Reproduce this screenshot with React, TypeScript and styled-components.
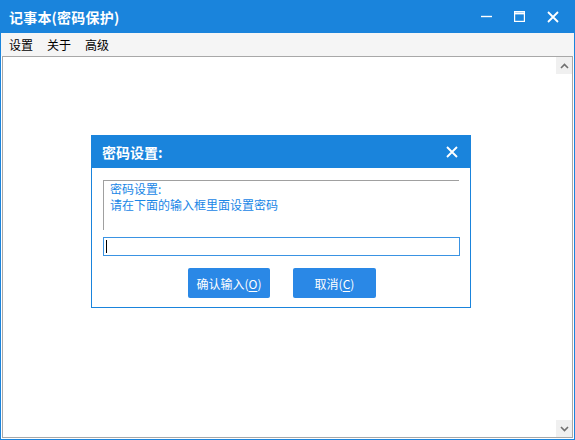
import React from "react";
import styled, { createGlobalStyle } from "styled-components";

const BLUE = "#1a84dc";
const FONT = `"Noto Sans CJK SC", "Noto Sans", sans-serif`;

const GlobalStyle = createGlobalStyle`
  html, body {
    margin: 0;
    padding: 0;
    background: #ffffff;
  }
  body {
    font-family: ${FONT};
  }
`;

const Window = styled.div`
  position: relative;
  width: 575px;
  height: 440px;
  box-sizing: border-box;
  display: flex;
  flex-direction: column;
  border: 1px solid ${BLUE};
  border-top: none;
  background: #ffffff;
  overflow: hidden;
`;

const TitleBar = styled.div`
  height: 33px;
  flex: none;
  display: flex;
  align-items: center;
  background: ${BLUE};
  color: #ffffff;
  padding-left: 8px;
`;

const Title = styled.div`
  flex: 1;
  font-size: 14px;
  font-weight: 700;
  letter-spacing: 0.2px;
`;

const CaptionButton = styled.div`
  width: 33px;
  height: 33px;
  display: flex;
  align-items: center;
  justify-content: center;
`;

const MenuBar = styled.div`
  height: 23px;
  flex: none;
  display: flex;
  align-items: center;
  background: #f5f5f5;
  padding-left: 1px;
  font-size: 12px;
  color: #000000;
`;

const MenuItem = styled.span`
  padding: 0 7px;
`;

const Body = styled.div`
  flex: 1;
  display: flex;
  margin: 0 1px 1px 1px;
  border: 1px solid #a8a8a8;
  background: #ffffff;
`;

const Editor = styled.div`
  flex: 1;
`;

const ScrollBar = styled.div`
  width: 16px;
  display: flex;
  flex-direction: column;
  justify-content: space-between;
  background: #ffffff;
`;

const ScrollButton = styled.div`
  height: 17px;
  display: flex;
  align-items: center;
  justify-content: center;
  background: #f0f0f0;
`;

const Dialog = styled.div`
  position: absolute;
  left: 90px;
  top: 135px;
  width: 380px;
  height: 173px;
  box-sizing: border-box;
  border: 1px solid ${BLUE};
  background: #ffffff;
  display: flex;
  flex-direction: column;
`;

const DialogTitle = styled.div`
  height: 32px;
  display: flex;
  align-items: center;
  justify-content: space-between;
  background: ${BLUE};
  color: #ffffff;
  padding: 0 12px 0 10px;
  font-size: 14px;
  font-weight: 700;
`;

const DialogBody = styled.div`
  flex: 1;
  display: flex;
  flex-direction: column;
  padding: 12px 10px 9px 11px;
`;

const GroupBox = styled.div`
  height: 50px;
  box-sizing: border-box;
  border-top: 1px solid #a0a0a0;
  border-left: 1px solid #a0a0a0;
  padding: 0 0 0 6px;
  margin-right: 1px;
  color: #1886e6;
  font-size: 12px;
  line-height: 16px;
`;

const Input = styled.div`
  margin-top: 7px;
  height: 19px;
  box-sizing: border-box;
  border: 1px solid #3a93e3;
  display: flex;
  align-items: center;
  padding-left: 2px;
`;

const Caret = styled.span`
  width: 1px;
  height: 13px;
  background: #000000;
`;

const ButtonRow = styled.div`
  margin-top: 12px;
  display: flex;
  justify-content: center;
  gap: 23px;
  padding-left: 1px;
`;

const Button = styled.div<{ $w: number }>`
  width: ${(p) => p.$w}px;
  height: 30px;
  display: flex;
  align-items: center;
  justify-content: center;
  background: #2a88e6;
  border-radius: 2px;
  color: #ffffff;
  font-size: 12px;
`;

const Key = styled.span`
  text-decoration: underline;
  text-underline-offset: 2px;
`;

const Chevron: React.FC<{ up?: boolean }> = ({ up }) => (
  <svg width="9" height="6" viewBox="0 0 9 6">
    <path
      d={up ? "M1 5 L4.5 1.5 L8 5" : "M1 1 L4.5 4.5 L8 1"}
      stroke="#707070"
      strokeWidth="1.6"
      fill="none"
    />
  </svg>
);

const App: React.FC = () => {
  return (
    <>
      <GlobalStyle />
      <Window>
        <TitleBar>
          <Title>记事本(密码保护)</Title>
          <CaptionButton>
            <svg width="11" height="11" viewBox="0 0 11 11">
              <path d="M0 5.5 H11" stroke="#fff" strokeWidth="1.4" />
            </svg>
          </CaptionButton>
          <CaptionButton>
            <svg width="11" height="11" viewBox="0 0 11 11">
              <rect x="0.6" y="0.6" width="9.8" height="9.8" stroke="#fff" strokeWidth="1.2" fill="none" />
              <path d="M0.6 2.4 H10.4" stroke="#fff" strokeWidth="2" />
            </svg>
          </CaptionButton>
          <CaptionButton style={{ marginRight: 5 }}>
            <svg width="12" height="12" viewBox="0 0 12 12">
              <path d="M1 1 L11 11 M11 1 L1 11" stroke="#fff" strokeWidth="1.8" />
            </svg>
          </CaptionButton>
        </TitleBar>
        <MenuBar>
          <MenuItem>设置</MenuItem>
          <MenuItem>关于</MenuItem>
          <MenuItem>高级</MenuItem>
        </MenuBar>
        <Body>
          <Editor />
          <ScrollBar>
            <ScrollButton>
              <Chevron up />
            </ScrollButton>
            <ScrollButton>
              <Chevron />
            </ScrollButton>
          </ScrollBar>
        </Body>

        <Dialog>
          <DialogTitle>
            <span>密码设置:</span>
            <svg width="12" height="12" viewBox="0 0 12 12">
              <path d="M1 1 L11 11 M11 1 L1 11" stroke="#fff" strokeWidth="1.9" />
            </svg>
          </DialogTitle>
          <DialogBody>
            <GroupBox>
              密码设置:
              <br />
              请在下面的输入框里面设置密码
            </GroupBox>
            <Input>
              <Caret />
            </Input>
            <ButtonRow>
              <Button $w={82}>
                确认输入(<Key>O</Key>)
              </Button>
              <Button $w={83}>
                取消(<Key>C</Key>)
              </Button>
            </ButtonRow>
          </DialogBody>
        </Dialog>
      </Window>
    </>
  );
};

export default App;
